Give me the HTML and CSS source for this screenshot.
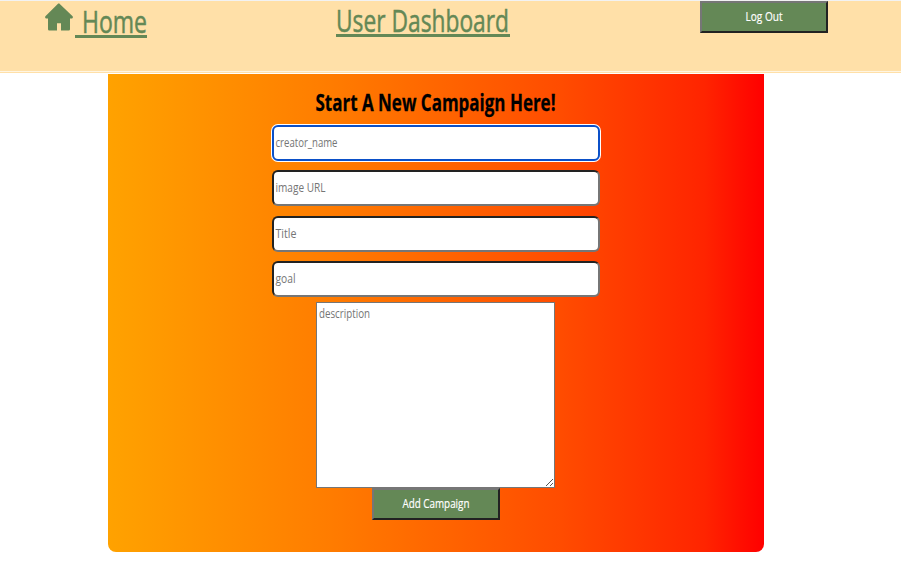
FILE: index.html
```html
<!DOCTYPE html>
<html lang="en">
<head>
<meta charset="utf-8">
<title>User Dashboard</title>
<link rel="stylesheet" href="styles.css">
</head>
<body>
<header class="navbar">
  <a class="home">
    <svg class="home-icon" width="28" height="28" viewBox="0 0 28 28"><path d="M14 0.3 27.6 13.3Q28.4 14.5 27 15.6H25V26.2Q25 27.5 23.7 27.5H16V20.2H12V27.5H4.3Q3 27.5 3 26.2V15.6H1Q-.4 14.5.4 13.3L13 .8Q14-.2 15 .8Z"/></svg>
    <span class="home-link"><svg class="label large" width="65" height="34"><text x="0" y="32" textLength="65" lengthAdjust="spacingAndGlyphs">Home</text></svg></span>
  </a>
  <a class="dashboard-link"><svg class="label large" width="174" height="33"><text x="0" y="31" textLength="173" lengthAdjust="spacingAndGlyphs">User Dashboard</text></svg></a>
  <button class="button logout"><svg class="label" width="37" height="18"><text x="-0.5" y="13" textLength="37" lengthAdjust="spacingAndGlyphs">Log Out</text></svg></button>
</header>
<main class="panel">
  <h2 class="heading"><svg class="label title" width="240" height="34"><text x="-0.5" y="26" textLength="240" lengthAdjust="spacingAndGlyphs">Start A New Campaign Here!</text></svg></h2>
  <form class="form">
    <div class="field focused"><svg class="label hint" width="62" height="18"><text x="0.5" y="13" textLength="62" lengthAdjust="spacingAndGlyphs">creator_name</text></svg></div>
    <div class="field image"><svg class="label hint" width="50" height="18"><text x="0.5" y="13" textLength="50" lengthAdjust="spacingAndGlyphs">image URL</text></svg></div>
    <div class="field name"><svg class="label hint" width="21" height="18"><text x="0.5" y="13" textLength="21" lengthAdjust="spacingAndGlyphs">Title</text></svg></div>
    <div class="field goal"><svg class="label hint" width="20" height="18"><text x="0.5" y="13" textLength="20" lengthAdjust="spacingAndGlyphs">goal</text></svg></div>
    <div class="description"><svg class="label hint" width="52" height="18"><text x="0" y="13" textLength="51" lengthAdjust="spacingAndGlyphs">description</text></svg>
      <svg class="grip" width="9" height="9" viewBox="0 0 9 9"><path d="M1 8 8 1M5 8 8 5"/></svg>
    </div>
    <button class="button" type="button"><svg class="label" width="67" height="18"><text x="-0.5" y="13" textLength="67" lengthAdjust="spacingAndGlyphs">Add Campaign</text></svg></button>
  </form>
</main>
</body>
</html>
```
FILE: styles.css
```css
* { box-sizing: border-box; }

body {
  margin: 0;
  background: #fff;
  font-family: "Open Sans", "Noto Sans", sans-serif;
}

.navbar {
  display: grid;
  grid-template-columns: 336px 364px 128px;
  align-items: start;
  height: 74px;
  border-top: 1px solid #f2f2f2;
  background: linear-gradient(#ffe0a8 0 70px, #fff5e2 70px 71px, #ffe0a8 71px 72px, #fff 72px);
}

.label { display: block; overflow: visible; font-size: 13.33px; fill: currentColor; }
.label.large { font-size: 31px; stroke: currentColor; stroke-width: 0.5px; }
.label.title { font-size: 23.5px; font-weight: 700; stroke: currentColor; stroke-width: 0.3px; }
.label.hint { color: #757575; }

.home { display: flex; padding-left: 45px; color: #648856; }
.home-icon { margin-top: 2px; fill: currentColor; }
.home-link { margin-left: 2px; padding-left: 7px; border-bottom: 3px solid #648856; width: 72px; }
.dashboard-link { width: 174px; border-bottom: 3px solid #648856; color: #648856; }

.button {
  display: flex;
  align-items: center;
  justify-content: center;
  width: 128px;
  height: 32px;
  padding: 0;
  border: 2px solid;
  border-color: #767676 #222 #222 #767676;
  background: #648856;
  color: #fff;
  font-family: inherit;
}
.button .label { stroke: currentColor; stroke-width: 0.2px; }

.panel {
  width: 656px;
  height: 478px;
  margin-left: 108px;
  padding-top: 11px;
  border-radius: 0 0 8px 8px;
  background: linear-gradient(90deg, #ffa200, #ff7c00 34%, #ff4c00 69%, #ff2400 91%, #f00);
}

.heading { display: flex; justify-content: center; height: 40px; margin: 0; }
.form { display: flex; flex-direction: column; align-items: center; }

.field {
  display: flex;
  align-items: center;
  width: 328px;
  height: 36px;
  margin-bottom: 9px;
  padding-left: 1px;
  border: 2px solid;
  border-color: #222 #767676 #767676 #222;
  border-radius: 6px;
  background: #fff;
}
.field.focused { border-color: #0b50c8; box-shadow: 0 0 0 1px #fff; }
.field.image { margin-bottom: 10px; }
.field.goal { margin-bottom: 5px; }

.description {
  position: relative;
  width: 239px;
  height: 186px;
  margin-right: 1px;
  padding: 2px;
  border: 1px solid #767676;
  background: #fff;
}
.grip { position: absolute; right: 0; bottom: 0; fill: none; stroke: #555; stroke-width: 1; }
```
